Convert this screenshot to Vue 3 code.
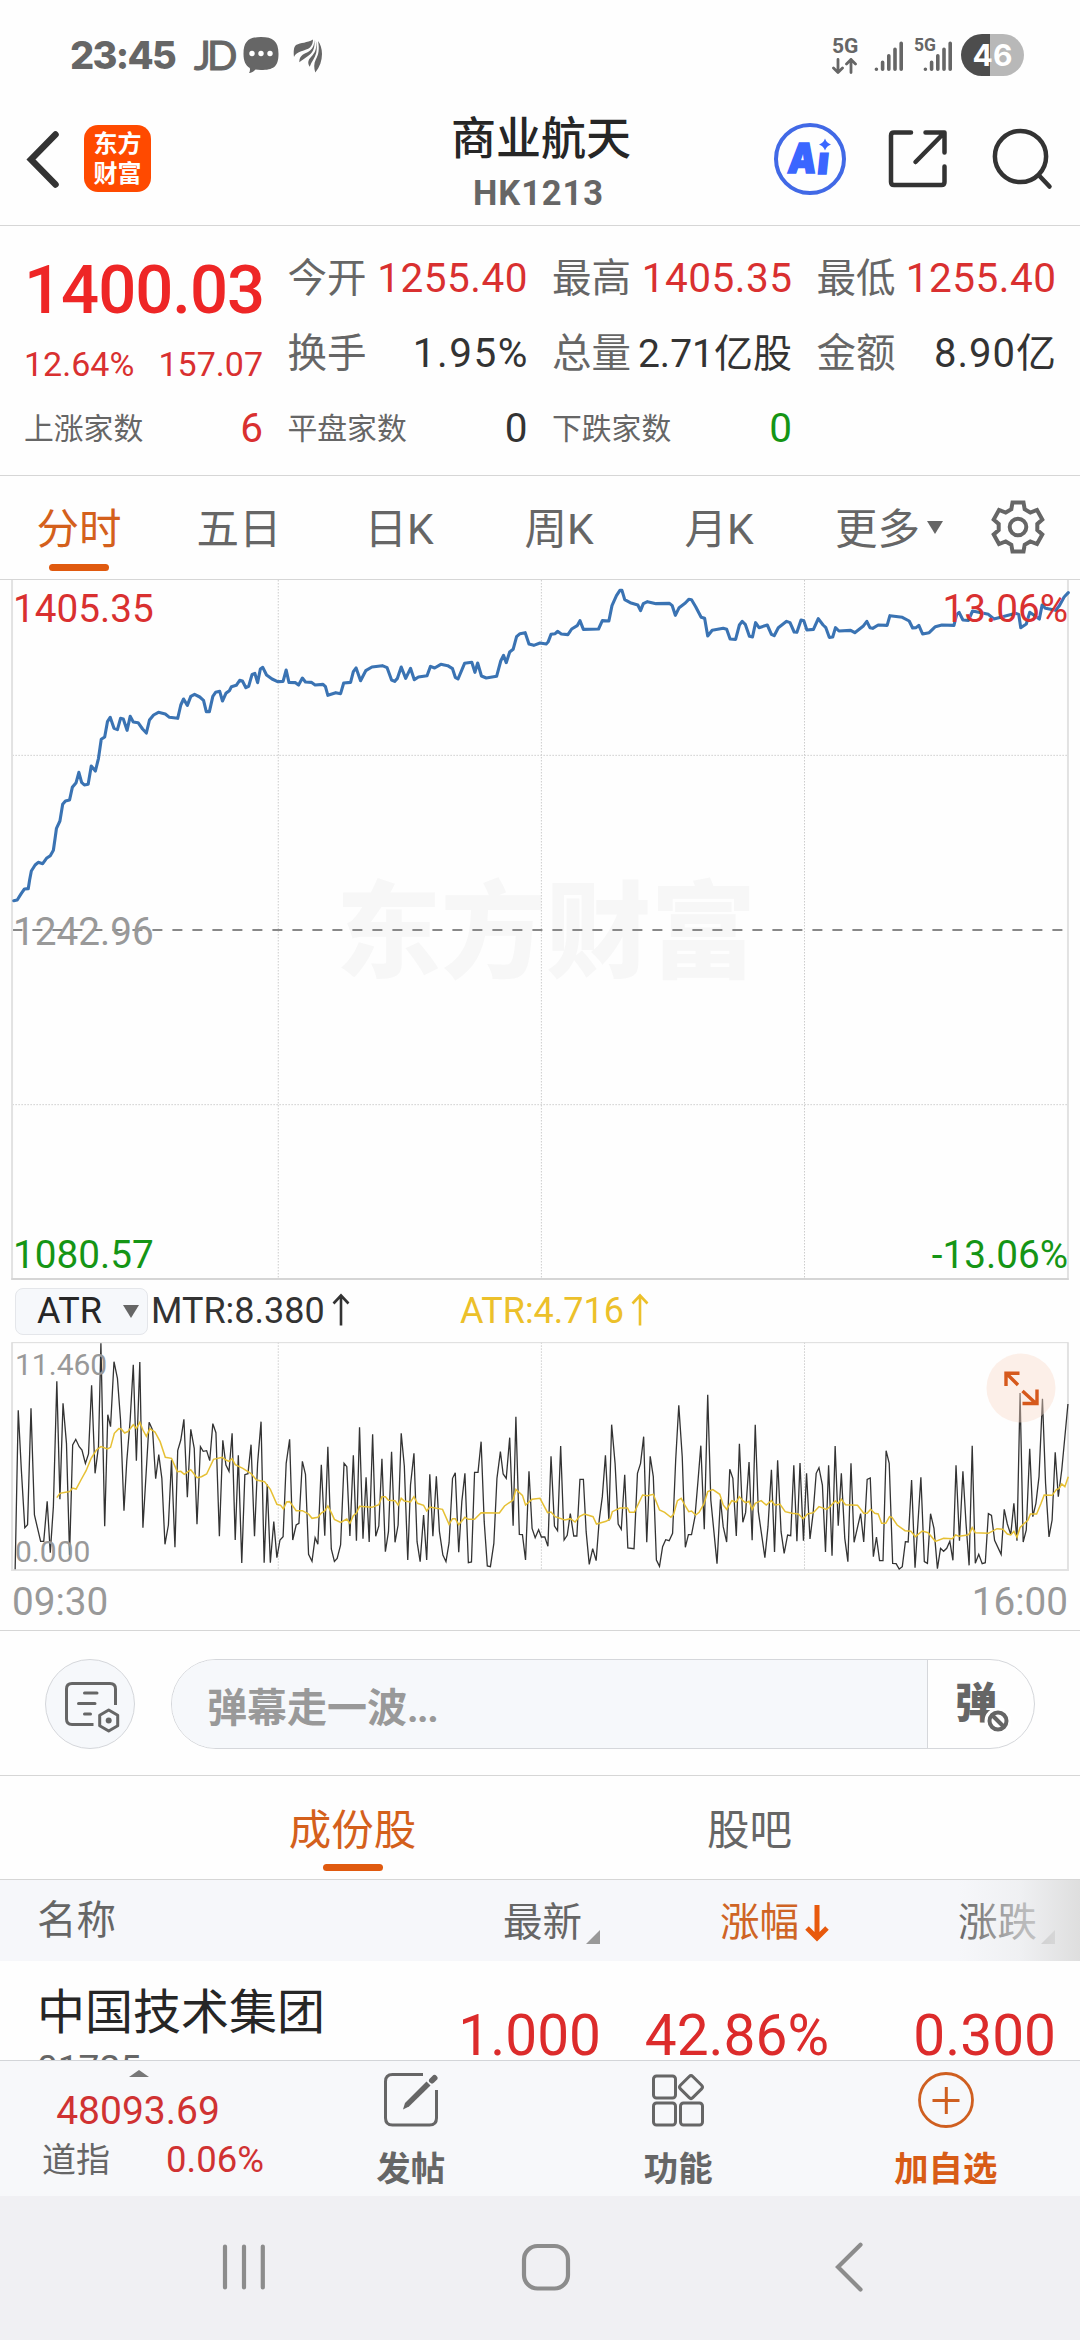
<script setup>
const stats = [
  { label: '今开', value: '1255.40', tone: 'up', size: 40.5, gap: 0.5 },
  { label: '最高', value: '1405.35', tone: 'up', size: 40.5, gap: 0.5 },
  { label: '最低', value: '1255.40', tone: 'up', size: 40.5, gap: 0.5 },
  { label: '换手', value: '1.95%', size: 40.5, gap: 1.5 },
  { label: '总量', value: '2.71亿股', size: 39, gap: 0 },
  { label: '金额', value: '8.90亿', size: 40, gap: 1 },
]
const counts = [
  { label: '上涨家数', value: '6', tone: 'up' },
  { label: '平盘家数', value: '0' },
  { label: '下跌家数', value: '0', tone: 'down' },
]
const periods = ['分时', '五日', '日K', '周K', '月K']

// Intraday price line, chart units
const price = '40,977 50,975 62,955 71,942 82,941 86,915 91,888 102,870 111,862 124,866 135,850 146,842 155,826 160,790 164,760 174,738 182,688 190,678 202,675 210,637 221,623 229,592 237,622 245,630 256,628 265,573 277,588 286,550 294,493 304,486 312,440 320,427 331,460 341,464 350,430 358,432 369,466 378,424 387,441 401,443 414,462 425,474 434,435 446,420 460,412 480,417 492,427 516,430 525,390 533,372 544,391 554,364 565,358 580,366 591,376 599,410 608,410 618,364 626,352 638,349 646,378 656,355 666,347 672,335 686,331 696,316 704,318 714,338 722,334 732,298 740,295 748,323 756,282 763,277 774,300 790,312 806,320 822,319 831,285 839,322 858,323 867,330 878,309 887,321 904,322 915,330 938,328 945,335 952,361 975,353 989,356 998,324 1018,322 1026,290 1034,279 1047,317 1062,287 1080,276 1110,272 1124,278 1137,315 1146,319 1154,310 1165,276 1178,310 1192,280 1203,314 1215,306 1240,302 1250,274 1262,279 1280,268 1300,272 1314,281 1322,307 1330,312 1349,265 1370,262 1379,292 1387,264 1398,303 1412,309 1442,304 1454,258 1462,241 1470,263 1480,231 1490,223 1500,185 1510,176 1525,173 1536,207 1550,211 1568,204 1586,207 1592,200 1600,178 1612,176 1619,169 1630,177 1649,179 1660,162 1676,152 1684,137 1694,163 1738,162 1749,137 1768,138 1777,92 1790,62 1800,46 1806,46 1814,74 1830,83 1852,90 1860,107 1868,86 1880,80 1905,86 1944,85 1952,92 1961,121 1972,98 1990,84 2000,73 2008,74 2020,95 2036,127 2046,130 2055,183 2068,166 2100,160 2110,163 2120,192 2136,193 2147,150 2155,139 2164,148 2176,184 2185,186 2194,143 2204,158 2228,150 2240,178 2248,182 2260,158 2284,139 2294,143 2306,171 2314,172 2326,135 2334,137 2343,165 2362,163 2376,131 2390,150 2398,158 2408,187 2418,186 2426,158 2436,168 2470,166 2482,173 2506,154 2517,139 2526,158 2534,160 2550,150 2576,151 2584,122 2620,127 2640,138 2650,159 2660,158 2668,151 2679,177 2698,173 2716,155 2735,150 2770,151 2778,118 2785,112 2796,135 2812,136 2824,108 2870,118 2886,132 2950,115 2958,118 2964,158 2980,147 2990,112 3018,132 3026,90 3036,100 3065,106 3076,92 3090,66 3102,53'

// ATR indicator series, chart units
const mtr = '44,1018 53,541 62,720 72,893 80,884 90,535 100,855 118,934 127,934 137,814 146,968 155,830 165,454 174,808 183,520 193,640 202,975 211,645 220,628 230,650 238,660 248,700 257,672 266,466 276,730 286,650 293,340 304,889 313,554 321,590 331,395 341,445 350,570 360,842 368,695 378,570 387,404 396,692 406,396 415,893 433,577 443,600 452,746 461,674 470,745 479,943 489,885 498,690 508,952 516,662 525,630 534,568 544,802 554,598 564,655 572,883 582,650 590,664 600,662 609,692 618,581 627,608 637,919 647,631 656,705 665,724 674,610 683,930 692,676 702,999 711,734 720,731 729,644 739,919 748,700 758,575 767,998 776,763 785,998 795,875 804,983 813,930 822,920 831,700 841,628 850,930 860,885 868,880 878,694 887,733 896,973 906,994 915,923 923,943 933,704 943,917 952,650 962,957 971,994 979,985 989,945 999,700 1007,710 1016,918 1026,676 1035,932 1044,592 1054,926 1063,742 1072,936 1082,613 1091,919 1100,888 1109,686 1119,965 1128,905 1137,665 1147,937 1156,885 1165,610 1174,708 1184,990 1192,765 1202,670 1211,935 1220,995 1230,855 1239,990 1248,733 1257,919 1267,739 1276,905 1286,975 1295,995 1304,938 1314,745 1322,728 1332,967 1341,815 1350,730 1360,998 1369,996 1378,727 1388,727 1397,635 1406,875 1415,1008 1424,1010 1434,940 1443,745 1453,665 1461,732 1470,745 1480,623 1490,887 1498,560 1508,913 1517,914 1526,990 1536,724 1545,895 1554,923 1564,899 1572,921 1582,921 1591,949 1600,679 1610,888 1619,902 1628,648 1638,930 1647,916 1656,851 1666,918 1675,918 1684,748 1694,748 1702,905 1711,1003 1721,956 1731,992 1740,870 1749,800 1758,676 1768,872 1776,584 1786,700 1795,882 1804,898 1814,734 1823,954 1841,956 1851,730 1860,700 1869,620 1878,937 1888,679 1897,740 1906,990 1915,1009 1924,950 1933,929 1943,932 1953,910 1962,690 1971,526 1981,680 1990,952 1999,914 2008,914 2018,860 2027,750 2035,647 2045,898 2055,494 2064,810 2073,905 2082,1001 2092,808 2100,890 2110,936 2119,718 2128,745 2138,918 2147,641 2157,877 2165,848 2175,696 2184,931 2193,584 2202,845 2221,983 2230,890 2240,719 2249,966 2258,691 2268,905 2277,970 2287,915 2296,917 2305,706 2314,934 2323,699 2333,932 2342,730 2352,927 2361,850 2370,730 2378,713 2388,765 2397,966 2406,706 2416,977 2425,648 2434,887 2443,730 2453,925 2462,995 2471,700 2480,937 2499,851 2508,936 2518,748 2527,744 2536,980 2545,921 2554,992 2564,992 2573,662 2582,700 2592,1000 2602,1001 2611,1017 2620,1010 2629,935 2637,936 2647,750 2657,1013 2674,742 2684,995 2693,1000 2702,851 2712,895 2722,1016 2731,955 2740,964 2749,955 2758,934 2767,991 2776,706 2786,932 2796,724 2805,880 2814,1006 2823,647 2832,1000 2842,973 2852,1001 2861,998 2870,851 2879,856 2888,931 2907,973 2916,838 2925,882 2935,914 2944,820 2953,932 2962,489 2971,936 2980,900 2990,656 2999,860 3008,820 3017,740 3027,506 3036,760 3046,921 3055,870 3064,667 3073,800 3083,720 3101,522'
const atr = '165,803 174,790 190,787 202,785 211,774 221,777 235,750 250,722 265,684 280,660 293,650 312,657 321,652 332,610 345,596 352,597 362,609 372,604 387,584 396,596 406,577 415,600 425,619 435,596 450,606 465,635 480,682 498,685 515,725 525,724 535,733 554,719 572,743 585,740 600,732 620,688 645,682 656,690 665,694 674,686 683,704 705,715 728,730 745,750 768,755 785,778 804,823 815,826 823,837 832,816 841,815 860,842 878,842 896,852 906,865 923,862 933,849 943,843 952,828 962,848 971,868 989,877 1007,867 1016,880 1026,857 1035,849 1044,829 1080,832 1100,824 1109,800 1119,800 1128,811 1147,812 1156,825 1165,805 1174,813 1192,816 1202,800 1212,820 1230,826 1239,843 1248,831 1285,838 1304,883 1314,866 1322,866 1332,884 1350,862 1360,868 1378,868 1397,848 1450,849 1465,828 1490,810 1498,778 1517,796 1526,825 1545,808 1568,805 1590,848 1600,846 1612,860 1640,870 1656,866 1670,876 1682,860 1697,852 1722,860 1732,882 1760,874 1772,866 1778,845 1800,834 1822,834 1828,847 1842,847 1866,795 1880,797 1897,793 1915,840 1930,847 1948,862 1956,853 1967,812 1978,805 1990,828 2000,845 2008,843 2020,855 2030,847 2044,822 2055,785 2070,779 2090,793 2100,825 2110,838 2125,812 2138,816 2147,800 2157,812 2165,818 2175,814 2184,838 2193,820 2210,812 2225,825 2240,812 2250,825 2265,823 2280,845 2300,850 2318,852 2332,866 2345,852 2362,848 2378,830 2400,838 2410,830 2425,813 2434,820 2443,808 2455,824 2490,826 2508,850 2518,850 2528,838 2540,850 2550,852 2560,880 2572,880 2583,860 2590,862 2605,885 2628,902 2645,904 2658,920 2678,903 2695,908 2716,934 2740,925 2765,926 2775,915 2785,919 2810,915 2815,911 2823,893 2832,908 2870,910 2895,896 2912,898 2925,912 2935,915 2944,904 2953,922 2962,892 2985,870 2992,852 3010,852 3023,820 3032,795 3055,796 3068,778 3075,776 3083,762 3092,770 3102,740'
</script>

<template>
  <div class="screen">
    <div class="status">
      <span class="clock">23:45</span>
      <span class="jd">JD</span>
      <svg class="bubble" width="36" height="38" viewBox="0 0 36 38">
        <path d="M18 1C30 1 35.500 5 35.500 18S30 34 18 34c-2 0-4-.2-5.500-.5C10.500 35.500 8.500 37 6 37c1-1.500 1.200-3 .8-5C2.500 29.500.500 25 .500 18 .500 5 6 1 18 1z" fill="#666" />
        <g fill="#fff"><circle cx="9" cy="17.500" r="2.700" /><circle cx="18" cy="17.500" r="2.700" /><circle cx="27" cy="17.500" r="2.700" /></g>
      </svg>
      <svg class="wing" width="30" height="34" viewBox="0 0 30 34">
        <g fill="#666">
          <path d="M20 .5C14 4 8 3.500 3 6 .500 8 .5 13 1 18 3 12 13 12 17 8.500c2-2 3-5 3-8z" />
          <path d="M21.300.8c.3 8-4 11.500-9 13.500-4 2-6 4-6 9C13 18 17.500 16.500 20 11.500c1.700-3 1.800-7 1.300-10.700z" />
          <path d="M22.700 1.300c1.500 8-.5 12.500-4.500 16.500-3 3-4 6-1.500 10 2-5.500 5-8.300 6.500-13.800 1-4 .6-9-.5-12.700z" />
          <path d="M25 2c1.500 7.500.8 13.500-2.200 18.500-2 4-2 8-.5 13C26.800 28 29 21.500 29 15c0-5-1.500-10-4-13z" />
        </g>
      </svg>
      <span class="grow"></span>
      <div class="net">
        <span>5G</span>
        <svg width="26" height="16" viewBox="0 0 26 16" fill="none" stroke="#666" stroke-width="2.800" stroke-linecap="round" stroke-linejoin="round"><path d="M6 1.500v13M1.500 10 6 14.500 10.500 10M19 14.500v-13M14.500 6 19 1.500 23.500 6" /></svg>
      </div>
      <svg class="sig" width="30" height="32" viewBox="0 0 30 32" stroke="#666" stroke-width="3.600" stroke-linecap="round"><path d="M2.400 28.300v0M8.600 28.300v-7M14.800 28.300v-13.500M21 28.300v-20M27.200 28.300v-26" /></svg>
      <div class="sig2">
        <span>5G</span>
        <svg width="30" height="32" viewBox="0 0 30 32" stroke="#666" stroke-width="3.600" stroke-linecap="round"><path d="M2.400 28.300v0M8.600 28.300v-7M14.800 28.300v-13.500M21 28.300v-20M27.200 28.300v-26" /></svg>
      </div>
      <span class="battery">46</span>
    </div>

    <header class="header">
      <div class="side">
        <svg width="40" height="60" viewBox="0 0 40 60" fill="none" stroke="#333" stroke-width="6.500" stroke-linecap="round" stroke-linejoin="miter"><path d="M33.500 5.500 9 30.500 33.500 55.500" /></svg>
        <div class="logo">东方<br>财富</div>
      </div>
      <div class="title">
        <div class="name">商业航天</div>
        <div class="code">HK1213</div>
      </div>
      <div class="side right">
        <svg width="74" height="74" viewBox="0 0 74 74">
          <circle cx="37" cy="37" r="34" fill="none" stroke="#4169e6" stroke-width="4" />
          <g fill="#3a66ff" stroke="#3a66ff" stroke-width="1.600" font-family="Inter, sans-serif" font-weight="900" font-size="38">
            <text transform="translate(14 50.500) skewX(-6) scale(.93 1.080)">A</text>
            <text transform="translate(43.500 52) skewX(-6) scale(1 1)">ı</text>
          </g>
          <path d="M52 16.500q1.500 4.500 6 6-4.500 1.500-6 6-1.500-4.500-6-6 4.500-1.500 6-6z" fill="#3a66ff" />
        </svg>
        <svg class="share" width="62" height="62" viewBox="0 0 62 62" fill="none" stroke="#333" stroke-width="4.500" stroke-linecap="round" stroke-linejoin="round"><path d="M24 4.500H7q-3 0-3 3V54q0 3 3 3h47.500q3 0 3-3V38.500M38.500 4.500h19v20M57 5 28.500 34" /></svg>
        <svg class="search" width="62" height="64" viewBox="0 0 62 64" fill="none" stroke="#333" stroke-width="4.500" stroke-linecap="round"><circle cx="29.500" cy="29.500" r="25.600" /><path d="M49 49.500 58.500 59.500" /></svg>
      </div>
    </header>

    <section class="quote">
      <div class="main">
        <div class="last">1400.03</div>
        <div class="delta"><span>12.64%</span><span>157.07</span></div>
      </div>
      <div v-for="s in stats" :key="s.label" class="stat">
        <span>{{ s.label }}</span><b :class="s.tone" :style="{ fontSize: s.size + 'px', letterSpacing: s.gap + 'px', marginRight: -s.gap + 'px' }">{{ s.value }}</b>
      </div>
      <div v-for="c in counts" :key="c.label" class="stat small">
        <span>{{ c.label }}</span><b :class="c.tone">{{ c.value }}</b>
      </div>
    </section>

    <nav class="periods">
      <div v-for="(p, i) in periods" :key="p" class="period" :class="{ active: i === 0 }">{{ p }}</div>
      <div class="more">更多<i></i></div>
      <svg class="gear" width="54" height="56" viewBox="0 0 54 56" fill="none" stroke="#666" stroke-width="4">
        <path stroke-linejoin="miter" d="M21.500 3.500h11l1.200 6.800 5.600 3.200 6.700-2.500 5.300 9.500-5 4.500v6l5 4.500-5.300 9.500-6.700-2.500-5.600 3.200-1.200 6.800h-11l-1.200-6.800-5.600-3.200L8 45l-5.300-9.500 5-4.500v-6l-5-4.500L8 11l6.700 2.500 5.600-3.200z" />
        <circle cx="27" cy="28" r="8.300" />
      </svg>
    </nav>

    <section class="chart">
      <div class="mark">东方财富</div>
      <svg class="plot" width="1080" height="700" viewBox="0 15 3136 2100" preserveAspectRatio="none" fill="none">
        <g stroke="#ccc" stroke-width="1" stroke-dasharray="1.500 1.500">
          <path d="M808 15V2115M1572 15V2115M2336 15V2115M36 541H3100M36 1589H3100" vector-effect="non-scaling-stroke" />
        </g>
        <path d="M36 1065H3100" stroke="#888" stroke-width="2" stroke-dasharray="10 10" vector-effect="non-scaling-stroke" />
        <path d="M35 15V2115M3101 15V2115" stroke="#e2e2e2" stroke-width="2" vector-effect="non-scaling-stroke" />
        <path d="M33 2112H3103" stroke="#d5d5d5" stroke-width="2" vector-effect="non-scaling-stroke" />
        <polyline :points="price" stroke="#3a73b3" stroke-width="3.100" stroke-linejoin="round" stroke-linecap="round" vector-effect="non-scaling-stroke" />
      </svg>
      <span class="lab hi up">1405.35</span>
      <span class="lab hi end up">13.06%</span>
      <span class="lab mid">1242.96</span>
      <span class="lab lo down">1080.57</span>
      <span class="lab lo end down">-13.06%</span>
    </section>

    <div class="indicator">
      <div class="picker">ATR<i></i></div>
      <div class="ind dark">MTR:8.380<svg width="18" height="34" viewBox="0 0 18 34" fill="none" stroke="currentColor" stroke-width="2.600"><path d="M9 32.500V3M1.500 10.500 9 2.500 16.500 10.500" /></svg></div>
      <div class="ind gold">ATR:4.716<svg width="18" height="34" viewBox="0 0 18 34" fill="none" stroke="currentColor" stroke-width="2.600"><path d="M9 32.500V3M1.500 10.500 9 2.500 16.500 10.500" /></svg></div>
    </div>

    <section class="subchart">
      <svg class="plot" width="1080" height="229" viewBox="0 336 3136 687" preserveAspectRatio="none" fill="none">
        <path d="M808 337V1020M1572 337V1020M2336 337V1020" stroke="#ccc" stroke-width="1" stroke-dasharray="1.500 1.500" vector-effect="non-scaling-stroke" />
        <path d="M35 338V1020H3101V338" stroke="#e2e2e2" stroke-width="2" vector-effect="non-scaling-stroke" />
        <path d="M33 338H3103" stroke="#dcdcdc" stroke-width="1" vector-effect="non-scaling-stroke" />
        <polyline :points="mtr" stroke="#333" stroke-width="1.300" vector-effect="non-scaling-stroke" />
        <polyline :points="atr" stroke="#e6c034" stroke-width="1.500" vector-effect="non-scaling-stroke" />
      </svg>
      <span class="sub top">11.460</span>
      <span class="sub bottom">0.000</span>
      <svg class="expand" width="70" height="70" viewBox="0 0 70 70">
        <circle cx="35" cy="35" r="34.500" fill="#fbdccb" fill-opacity=".42" />
        <path d="M20 33V20.300H33.500M20.500 20.500 32 32M36.500 38 50 50.500M51 36.500V50.500H36.500" fill="none" stroke="#d6591c" stroke-width="3.400" />
      </svg>
    </section>
    <div class="times"><span>09:30</span><span>16:00</span></div>

    <section class="danmu">
      <div class="round">
        <svg width="56" height="52" viewBox="0 0 56 52" fill="none" stroke="#666" stroke-width="3" stroke-linecap="round">
          <path stroke-linecap="butt" d="M29.500 43.500H8q-5.500 0-5.500-5.500V8q0-5.500 5.500-5.500h38q5.500 0 5.500 5.500v16" />
          <path d="M20.500 12h12.500M14.500 22.500h16.500M20.500 33h6" />
          <path stroke-linejoin="round" d="M44.700 29l9 5.200v10.600l-9 5.200-9-5.200V34.200z" />
          <circle cx="44.700" cy="39.500" r="3" fill="#666" stroke="none" />
        </svg>
      </div>
      <div class="pill">
        <div class="hint">弹幕走一波<span>...</span></div>
        <div class="toggle">弹
          <svg class="ban" width="28" height="28" viewBox="0 0 28 28" fill="#fff" stroke="#666" stroke-width="4"><circle cx="14" cy="14" r="12" stroke="#fff" stroke-width="3" /><circle cx="14" cy="14" r="8.500" /><path d="M8.500 8.500 19.500 19.500" /></svg>
        </div>
      </div>
    </section>

    <nav class="tabs">
      <div class="tab active">成份股</div>
      <div class="tab">股吧</div>
    </nav>

    <div class="grid thead">
      <span class="first">名称</span>
      <span class="h">最新<i></i></span>
      <span class="h hot">涨幅<svg width="24" height="38" viewBox="0 0 24 38" fill="none" stroke="#e8590c" stroke-width="5"><path d="M12 1v33M2 24 12 34 22 24" /></svg></span>
      <span class="h">涨跌<i></i></span>
      <div class="fade"></div>
    </div>
    <div class="list">
      <div class="grid row">
        <div class="stock"><div class="sname">中国技术集团</div><div class="scode">01725</div></div>
        <span>1.000</span><span>42.86%</span><span>0.300</span>
      </div>
    </div>

    <footer class="bar">
      <div class="index">
        <i></i>
        <div class="point">48093.69</div>
        <div class="line"><span>道指</span><b>0.06%</b></div>
      </div>
      <div class="act">
        <svg width="56" height="56" viewBox="0 0 56 56" fill="none" stroke="#666" stroke-width="3">
          <path d="M40 2.500H9.500q-7 0-7 7V46q0 7 7 7h37q7 0 7-7V18" />
          <path d="M20 37.500 22 31 43.500 9.500 47.500 13.500 26 34.500z" fill="#666" stroke="none" /><path d="M49 8.500 51.500 6" stroke-width="6" stroke-linecap="round" />
        </svg>
        <span>发帖</span>
      </div>
      <div class="act">
        <svg width="56" height="56" viewBox="0 0 56 56" fill="none" stroke="#666" stroke-width="3">
          <rect x="3.500" y="4" width="22" height="22" rx="3" /><rect x="3.500" y="31" width="22" height="22" rx="3" /><rect x="30.500" y="31" width="22" height="22" rx="3" />
          <rect x="32.300" y="6.300" width="17.500" height="17.500" rx="2.500" transform="rotate(45 41 15)" />
        </svg>
        <span>功能</span>
      </div>
      <div class="act hot">
        <svg width="56" height="56" viewBox="0 0 56 56" fill="none" stroke="#cf5f20" stroke-width="2.800"><circle cx="28" cy="28" r="26.500" /><path d="M14.500 28.500h27M28.300 15v27" stroke-width="3" /></svg>
        <span>加自选</span>
      </div>
    </footer>

    <div class="sysnav">
      <svg width="48" height="50" viewBox="0 0 48 50" stroke="#8c8c8c" stroke-width="4.200" stroke-linecap="round"><path d="M5 4.500v41M24 4.500v41M42.800 4.500v41" /></svg>
      <svg width="50" height="50" viewBox="0 0 50 50" fill="none" stroke="#8c8c8c" stroke-width="4.200"><rect x="3" y="4" width="44" height="42.500" rx="13.500" /></svg>
      <svg width="30" height="50" viewBox="0 0 30 50" fill="none" stroke="#8c8c8c" stroke-width="4.200" stroke-linecap="round"><path d="M26.500 2.800 4 25 26.500 47.500" /></svg>
    </div>
  </div>
</template>

<style>
body { background: #fefefe; }
</style>

<style scoped>
.screen { width: 1080px; height: 2340px; overflow: hidden; display: flex; flex-direction: column; background: #fefefe; color: #333; font-family: Roboto, "Noto Sans CJK SC", sans-serif; }
.screen * { box-sizing: border-box; }
.screen > * { flex-shrink: 0; }
svg { display: block; flex-shrink: 0; }
b { font-weight: 400; }
.grow { flex: 1; }
.up { color: #d93030; }
.down { color: #159515; }

.status { height: 92px; padding: 0 56px 0 70px; display: flex; align-items: flex-start; color: #666; }
.clock { width: 123px; font: 800 38px/54px Inter, sans-serif; letter-spacing: -1.700px; padding-top: 28px; white-space: nowrap; }
.jd { width: 50px; font: 400 40px/54px Lato, sans-serif; -webkit-text-stroke: 1px #666; letter-spacing: -4px; padding: 28px 0 0 1px; }
.bubble { margin-top: 36px; }
.wing { margin: 39px 0 0 14px; }
.net { width: 42px; padding-top: 36px; font-weight: 700; font-size: 21px; line-height: 21px; }
.sig { margin-top: 41px; margin-right: 11px; }
.net svg { margin-top: 1px; }
.sig2 { width: 46px; display: flex; padding: 41px 0 0 8px; position: relative; }
.sig2 span { position: absolute; left: -1px; top: -5px; font-weight: 700; font-size: 17.500px; line-height: 18px; margin-top: 41px; }
.battery { width: 63px; height: 42px; margin-top: 34px; border-radius: 21px; background: linear-gradient(90deg, #4d4d4d 29px, #b8b8b8 29px); color: #fff; font: 700 30px/42px Inter, sans-serif; text-align: center; }

.header { height: 134px; border-bottom: 1px solid #d6d6d6; display: flex; justify-content: space-between; }
.side { width: 320px; padding-left: 22px; display: flex; align-items: center; }
.side.right { padding: 0 27px 0 0; justify-content: flex-end; }
.logo { width: 67px; height: 67px; margin-left: 22px; border-radius: 14px; background: #ff4a00; color: #fff; font-weight: 700; font-size: 24px; line-height: 29.500px; text-align: center; padding-top: 5px; }
.title { text-align: center; }
.name { font-weight: 500; font-size: 45px; line-height: 60px; padding: 18px 0 0 2px; color: #262626; }
.code { font-weight: 700; font-size: 34.500px; line-height: 42px; margin: 2px 3px 0 0; letter-spacing: 0.900px; color: #666; }
.share { margin: 0 0 0 40px; }
.search { margin: 0 0 0 42px; }

.quote { height: 250px; border-bottom: 1px solid #d6d6d6; padding: 15px 24px 0; display: grid; grid-template-columns: 239px 240px 240px 239.500px; grid-template-rows: repeat(3, 75px); column-gap: 24.500px; }
.main { grid-row: 1 / 3; color: #ee2626; }
.last { font-weight: 500; font-size: 67px; line-height: 98px; letter-spacing: -1px; white-space: nowrap; }
.delta { display: flex; justify-content: space-between; font-size: 34px; line-height: 50px; color: #d93030; }
.stat { height: 75px; display: flex; justify-content: space-between; align-items: baseline; font-size: 40.500px; line-height: 75px; white-space: nowrap; }
.stat span { font-size: 39.500px; color: #666; }
.stat.small { align-items: flex-start; }
.stat.small span { font-size: 29.800px; }

.periods { height: 104px; border-bottom: 1px solid #d6d6d6; display: flex; font-size: 42.500px; line-height: 98px; padding-top: 5px; color: #666; }
.period { width: 160px; text-align: center; position: relative; }
.period:first-child { margin-left: -1px; }
.active { color: #d4601c; }
.active::after { content: ""; position: absolute; left: 50%; bottom: 8px; width: 60px; height: 7px; margin-left: -30px; border-radius: 4px; background: #e05a0f; }
.more { margin-left: 36px; width: 156px; display: flex; align-items: center; }
.more i, .picker i { border: 8px solid transparent; border-top: 13px solid #666; border-bottom: 0; margin-left: 7px; }
.more i { margin-top: -5px; }
.gear { margin-top: 18px; }

.chart { position: relative; height: 700px; }
.mark { position: absolute; left: 336px; top: 284px; font-weight: 900; font-size: 105px; line-height: 140px; color: #f7f7f7; white-space: nowrap; }
.plot { position: relative; }
.lab { position: absolute; left: 13px; font-size: 38.700px; line-height: 44px; }
.lab.end { left: auto; right: 12px; }
.hi { top: 7px; }
.mid { top: 330px; color: #999; }
.lo { top: 653px; }

.indicator { height: 62px; display: flex; align-items: center; padding: 0 0 0 15px; font-size: 36px; }
.picker { width: 133px; height: 47px; border: 1.500px solid #e4e6ea; border-radius: 8px; background: #f6f8fb; display: flex; align-items: center; padding-left: 21px; color: #262626; }
.picker i { margin-left: 21px; }
.ind { display: flex; align-items: center; width: 309px; padding-left: 3px; }
.ind svg { margin: -2px 0 0 7px; }
.gold { color: #ecc02a; }

.subchart { position: relative; height: 229px; }
.sub { position: absolute; left: 15px; font-size: 30px; line-height: 34px; color: #999; }
.sub.top { top: 6px; }
.sub.bottom { top: 193px; }
.expand { position: absolute; left: 986px; top: 11px; }
.times { height: 60px; border-bottom: 1px solid #d6d6d6; display: flex; justify-content: space-between; padding: 0 12px; font-size: 38.700px; line-height: 62px; color: #999; }

.danmu { height: 145px; border-bottom: 1px solid #d6d6d6; display: flex; align-items: center; padding: 2px 0 0 45px; }
.round { width: 90px; height: 90px; border: 1.500px solid #d5d7db; border-radius: 50%; background: #f6f8fb; padding: 21px 0 0 18px; }
.pill { width: 864px; height: 90px; margin-left: 36px; border: 1px solid #d5d7db; border-radius: 45px; overflow: hidden; display: flex; }
.hint { width: 756px; padding-left: 35px; border-right: 1px solid #d5d7db; background: #f6f8fb; color: #999; font-weight: 700; font-size: 40px; line-height: 97px; }
.hint span { letter-spacing: -1.500px; }
.toggle { position: relative; padding-left: 27px; color: #666; font-weight: 900; font-size: 42px; line-height: 88px; }
.ban { position: absolute; left: 56px; top: 47px; }

.tabs { height: 104px; border-bottom: 1px solid #d6d6d6; display: flex; padding-left: 154px; font-size: 42.500px; line-height: 98px; padding-top: 6px; color: #666; }
.tab { width: 397px; text-align: center; position: relative; }

.grid { display: grid; grid-template-columns: 336px 228px 228px 227px; padding-left: 37px; }
.thead { position: relative; height: 81px; background: #f6f7fa; font-size: 39.500px; line-height: 81px; color: #666; }
.h { display: flex; justify-content: flex-end; padding-top: 2px; }
.h i { align-self: flex-end; margin: 0 1px 19px 4px; border: 7.500px solid transparent; border-right-color: #999; border-bottom-color: #999; }
.h svg { margin: 22px 0 0 6px; }
.hot { color: #d85c16; }
.thead .hot { color: #cf6425; }
.fade { position: absolute; right: 0; top: 0; width: 122px; height: 81px; background: linear-gradient(90deg, rgba(246, 247, 250, 0), rgba(235, 236, 238, 0.6) 50%, #dedede 100%); }
.list { height: 99px; overflow: hidden; }
.row { height: 150px; align-items: center; text-align: right; font-size: 56.800px; line-height: 46px; color: #dc2b2b; }
.stock { text-align: left; line-height: 56px; padding-top: 9px; white-space: nowrap; }
.sname { font-size: 48px; color: #262626; }
.scode { font-size: 37px; color: #666; }

.bar { height: 136px; border-top: 1px solid #d3d5d8; background: #f7f8fa; display: flex; }
.index { width: 277px; padding: 9px 13px 0 42px; display: flex; flex-direction: column; align-items: center; color: #d03232; }
.index i { border: 10.500px solid transparent; border-bottom: 7px solid #777; border-top: 0; margin-left: -29px; }
.point { font-size: 39px; line-height: 50px; margin: 9px 0 0 -30px; }
.line { align-self: stretch; display: flex; justify-content: space-between; align-items: baseline; font-size: 36.500px; line-height: 48px; }
.line span { font-size: 34px; color: #666; }
.act { width: 267.500px; padding-top: 11px; display: flex; flex-direction: column; align-items: center; font-weight: 700; font-size: 34.400px; line-height: 44px; color: #666; }
.act span { margin-top: 19px; }
.act.hot { color: #d85c16; }

.sysnav { height: 144px; background: #f0f0f3; display: flex; padding: 46px 0 0 220px; }
.sysnav svg:nth-child(2) { margin-left: 253px; }
.sysnav svg:nth-child(3) { margin-left: 263px; }
</style>
